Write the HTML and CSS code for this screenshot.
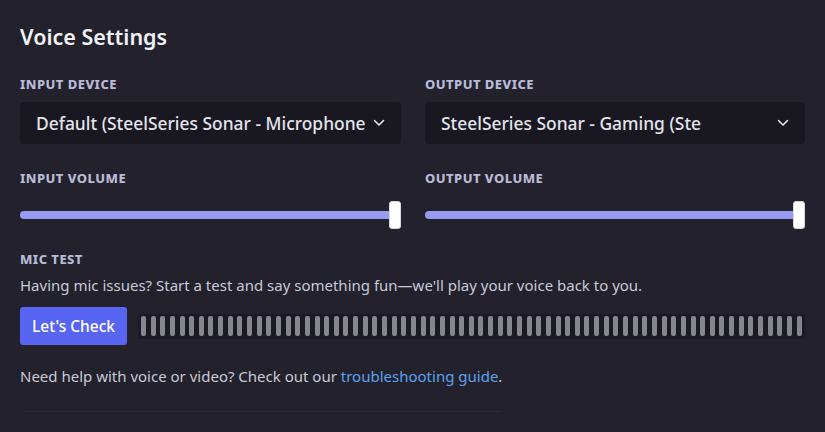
FILE: index.html
```html
<!DOCTYPE html>
<html>
<head>
<meta charset="utf-8">
<link rel="stylesheet" href="styles.css">
</head>
<body>
<main class="page">
  <h1 class="title">Voice Settings</h1>

  <div class="grid">
    <div class="col">
      <div class="label label-device">Input Device</div>
      <div class="select">
        <span class="select-text">Default (SteelSeries Sonar - Microphone</span>
        <svg class="chev" width="12" height="8" viewBox="0 0 12 8"><path d="M1.5 1.5 L6 6 L10.5 1.5" fill="none" stroke="#e6e7f0" stroke-width="1.6" stroke-linecap="round" stroke-linejoin="round"/></svg>
      </div>
    </div>
    <div class="col">
      <div class="label label-device">Output Device</div>
      <div class="select">
        <span class="select-text">SteelSeries Sonar - Gaming (Ste</span>
        <svg class="chev" width="12" height="8" viewBox="0 0 12 8"><path d="M1.5 1.5 L6 6 L10.5 1.5" fill="none" stroke="#e6e7f0" stroke-width="1.6" stroke-linecap="round" stroke-linejoin="round"/></svg>
      </div>
    </div>

    <div class="col">
      <div class="label label-vol">Input Volume</div>
      <div class="slider"><div class="track"></div><div class="thumb"></div></div>
    </div>
    <div class="col">
      <div class="label label-vol">Output Volume</div>
      <div class="slider"><div class="track"></div><div class="thumb"></div></div>
    </div>
  </div>

  <div class="label label-mic">Mic Test</div>
  <p class="desc">Having mic issues? Start a test and say something fun—we'll play your voice back to you.</p>
  <div class="mic-row">
    <button class="btn">Let's Check</button>
    <div class="meter">
      <span></span><span></span><span></span><span></span><span></span><span></span><span></span><span></span><span></span><span></span>
      <span></span><span></span><span></span><span></span><span></span><span></span><span></span><span></span><span></span><span></span>
      <span></span><span></span><span></span><span></span><span></span><span></span><span></span><span></span><span></span><span></span>
      <span></span><span></span><span></span><span></span><span></span><span></span><span></span><span></span><span></span><span></span>
      <span></span><span></span><span></span><span></span><span></span><span></span><span></span><span></span><span></span><span></span>
      <span></span><span></span><span></span><span></span><span></span><span></span><span></span><span></span><span></span><span></span>
      <span></span><span></span><span></span><span></span><span></span><span></span><span></span><span></span><span></span>
    </div>
  </div>

  <p class="help">Need help with voice or video? Check out our <a href="#" class="link">troubleshooting guide</a>.</p>
  <div class="divider"></div>
</main>
</body>
</html>
```
FILE: styles.css
```css
* { box-sizing: border-box; }
html, body {
  margin: 0;
  padding: 0;
  background: #22212c;
  height: 100%;
}
body {
  font-family: "Noto Sans", "Open Sans", sans-serif;
  color: #dfe0ea;
  overflow: hidden;
}
.page {
  padding: 25px 20px 0 20px;
  width: 825px;
}
.title {
  margin: 0;
  font-size: 21.5px;
  line-height: 24px;
  font-weight: 600;
  color: #f2f3f7;
}
.grid {
  display: grid;
  grid-template-columns: 381px 380px;
  column-gap: 24px;
  margin-top: 27px;
}
.label {
  font-size: 13px;
  line-height: 16px;
  font-weight: 800;
  text-transform: uppercase;
  letter-spacing: 0.035em;
  color: #b8bad6;
}
.label-device { margin-bottom: 10px; }
.label-vol { margin-top: 26px; }
.select {
  height: 42px;
  background: #191820;
  border-radius: 4px;
  display: flex;
  align-items: center;
  padding: 0 16px;
  gap: 6px;
}
.select-text {
  flex: 1;
  font-size: 17.4px;
  line-height: 20px;
  white-space: nowrap;
  color: #e3e4ee;
  font-weight: 500;
}
.chev { flex: none; }
.slider {
  position: relative;
  height: 28px;
  margin-top: 15px;
  display: flex;
  align-items: center;
}
.track {
  width: 100%;
  height: 8px;
  border-radius: 4px;
  background: #969af3;
}
.thumb {
  position: absolute;
  right: 0;
  top: 0;
  width: 12px;
  height: 28px;
  border-radius: 3px;
  background: #ffffff;
  border: 1px solid #d6d7e0;
}
.label-mic { margin-top: 22px; }
.desc {
  margin: 8px 0 0;
  font-size: 15px;
  line-height: 20px;
  color: #c9cad8;
}
.mic-row {
  display: flex;
  align-items: center;
  gap: 11px;
  margin-top: 12px;
}
.btn {
  flex: none;
  width: 107px;
  height: 38px;
  border: 0;
  border-radius: 3px;
  background: #5865f2;
  color: #ffffff;
  font-family: "Noto Sans", "Open Sans", sans-serif;
  font-size: 15.5px;
  font-weight: 500;
  padding: 0;
}
.meter {
  flex: 1;
  height: 25px;
  background: #1b1a23;
  border-radius: 3px;
  display: flex;
  align-items: center;
  justify-content: space-between;
  padding: 0 3px;
}
.meter span {
  width: 5px;
  height: 20px;
  border-radius: 2px;
  background: #86868e;
}
.help {
  margin: 21px 0 0;
  font-size: 15px;
  line-height: 20px;
  color: #c9cad8;
}
.link {
  color: #5ea2f0;
  text-decoration: none;
}
.divider {
  margin: 25px 0 0 5px;
  width: 477px;
  height: 1px;
  background: #2b2a37;
}
```
